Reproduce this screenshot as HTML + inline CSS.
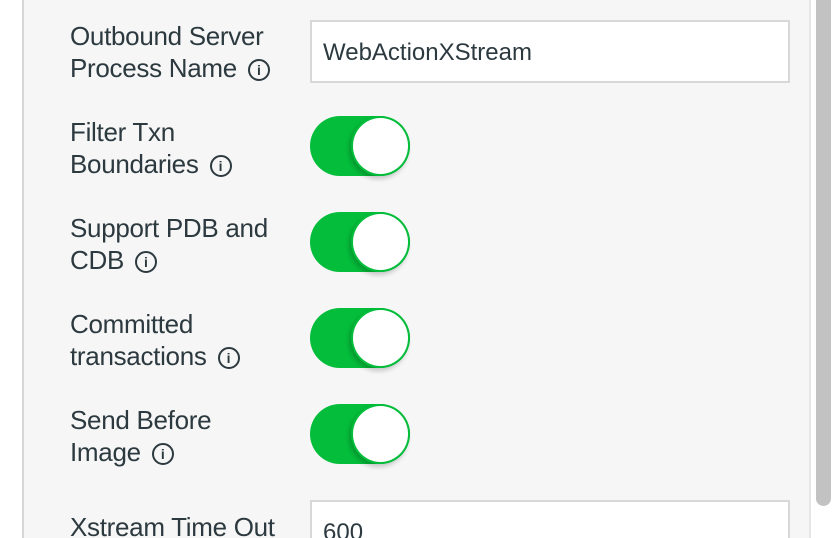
<!DOCTYPE html>
<html><head><style>
html,body{margin:0;width:838px;height:538px;overflow:hidden}
body{background:#fff;font-family:"Liberation Sans",sans-serif;color:#2c3a40;position:relative}
.panel{position:absolute;left:22px;top:-2px;width:785px;height:560px;background:#f6f6f6;border-left:2px solid #d6d6d6;border-right:2px solid #e6e6e6}
.sb{position:absolute;left:816px;top:0;width:15px;height:506px;background:#c2c2c2;border-radius:0 0 8px 8px}
.lbl{position:absolute;left:70px;font-size:26px;line-height:32px;letter-spacing:-0.3px;white-space:nowrap}
.i{display:inline-block;width:22px;height:22px;border:2px solid #2c3a40;border-radius:50%;box-sizing:border-box;font-size:14px;line-height:18px;text-align:center;font-weight:bold;vertical-align:2px;margin-left:11px;letter-spacing:0}
.inp{position:absolute;left:310px;width:480px;height:63px;box-sizing:border-box;background:#fff;border:2px solid #d8d8d8;font-size:24px;padding-left:11px;line-height:62px}
.tg{position:absolute;left:310px;width:100px;height:60px;border-radius:30px;background:#04bd3a}
.tg::after{content:"";position:absolute;left:41px;top:0;width:59px;height:60px;box-sizing:border-box;border-radius:50%;background:#fff;border:2px solid #04bd3a;box-shadow:-2px 3px 5px rgba(0,0,0,.2)}
</style></head><body>
<div class="panel"></div>
<div class="sb"></div>
<div class="lbl" style="top:20px">Outbound Server<br>Process Name<span class="i">i</span></div>
<div class="inp" style="top:20px">WebActionXStream</div>
<div class="lbl" style="top:116px">Filter Txn<br>Boundaries<span class="i">i</span></div>
<div class="tg" style="top:116px"></div>
<div class="lbl" style="top:212px">Support PDB and<br>CDB<span class="i">i</span></div>
<div class="tg" style="top:212px"></div>
<div class="lbl" style="top:308px">Committed<br>transactions<span class="i">i</span></div>
<div class="tg" style="top:308px"></div>
<div class="lbl" style="top:404px">Send Before<br>Image<span class="i">i</span></div>
<div class="tg" style="top:404px"></div>
<div class="lbl" style="top:511px">Xstream Time Out</div>
<div class="inp" style="top:500px">600</div>
</body></html>
